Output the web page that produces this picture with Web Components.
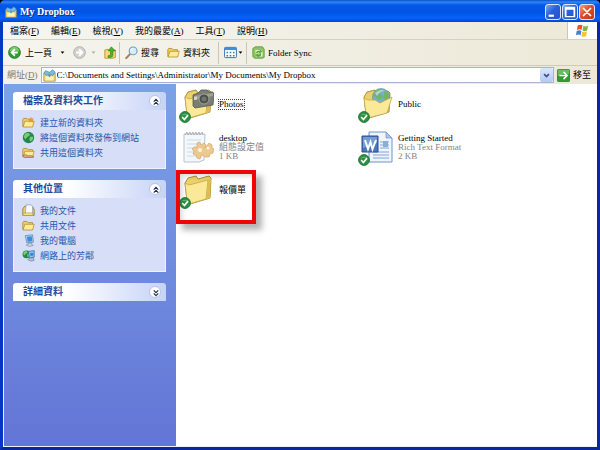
<!DOCTYPE html>
<html lang="zh-Hant">
<head>
<meta charset="utf-8">
<title>My Dropbox</title>
<style>
  body {
    margin: 0;
    background: #000;
    color: #000;
    font: 9px/12px "Liberation Serif", "Noto Sans CJK TC", serif;
  }
</style>
</head>
<body>
<xp-window>
  <xp-title-bar slot="bars" label="My Dropbox"></xp-title-bar>
  <xp-menu-bar slot="bars">
    <xp-menu key="F">檔案</xp-menu>
    <xp-menu key="E">編輯</xp-menu>
    <xp-menu key="V">檢視</xp-menu>
    <xp-menu key="A">我的最愛</xp-menu>
    <xp-menu key="T">工具</xp-menu>
    <xp-menu key="H">說明</xp-menu>
  </xp-menu-bar>
  <xp-tool-bar slot="bars"></xp-tool-bar>
  <xp-address-bar slot="bars" path="C:\Documents and Settings\Administrator\My Documents\My Dropbox"></xp-address-bar>

  <xp-task-group slot="tasks" label="檔案及資料夾工作">
    <xp-task icon="new-folder">建立新的資料夾</xp-task>
    <xp-task icon="globe">將這個資料夾發佈到網站</xp-task>
    <xp-task icon="share">共用這個資料夾</xp-task>
  </xp-task-group>
  <xp-task-group slot="tasks" label="其他位置">
    <xp-task icon="documents">我的文件</xp-task>
    <xp-task icon="folder">共用文件</xp-task>
    <xp-task icon="computer">我的電腦</xp-task>
    <xp-task icon="network">網路上的芳鄰</xp-task>
  </xp-task-group>
  <xp-task-group slot="tasks" label="詳細資料" collapsed></xp-task-group>

  <xp-file icon="big-photos" name="Photos" synced focused></xp-file>
  <xp-file icon="big-public" name="Public" synced></xp-file>
  <xp-file icon="big-config" name="desktop"><span>組態設定值</span><span>1 KB</span></xp-file>
  <xp-file icon="big-word" name="Getting Started" synced><span>Rich Text Format</span><span>2 KB</span></xp-file>
  <xp-file icon="big-folder" name="報價單" synced marked></xp-file>
</xp-window>

<script>
// small icons use a 16 unit box, the big- ones use a 32 unit box
const FOLDER = '<path d="M1 4.500L2 3h4l1.500 1.500H13V13H1z" fill="#f3cf62" stroke="#a67f1c" stroke-width=".9"/><path d="M3.500 6.500H15L13 13.500H1.300z" fill="#ffeb9a" stroke="#b18a25" stroke-width=".9"/>';
const BIG_FOLDER = '<path d="M3 9l3-5 8-2 2 3 11-3 2 2-1 20-20 6-3-4z" fill="#ecd068" stroke="#a8903c"/><path d="M3 9l4 2 19-5-2 19-17 5-2-3z" fill="#fbe998" stroke="#c0a74c" stroke-width=".8"/><path d="M26 6l3-2-1 20-4 2z" fill="#dfbd4d"/>';
const SMALL_GLOBE = '<circle cx="8" cy="8" r="7" fill="#258548"/><path d="M4 3l4-1 2 3-3 2-3 3-2-3zM10 7l4 0-1 4-3 2-1-3z" fill="#76ce6d"/><path d="M2 10l4 4-1 0-3-3zM10 2l3 2-2 1z" fill="#3480c4"/>';

const ICONS = {
  folder: FOLDER,
  'dropbox': '<path d="M1 5h14v10H1z" fill="#efd676" stroke="#ab9240"/><path d="M3 2l5 2 4-3 3 3-3 4-4-2-4 2-3-3z" fill="#75bce9" stroke="#337eac" stroke-width=".7"/><path d="M3 9h10v5H3z" fill="#fff3b6"/><path d="M6 8l2-2 2 2-2 2z" fill="#4a9dd2"/>',
  'flag': '<path d="M3 2.500q3-1.500 5 0L7 7.500q-2-1.500-5 0z" fill="#e6552b"/><path d="M9 3q2 1.500 5 0L13 8q-3 1.500-5 0z" fill="#7cb93d"/><path d="M1.800 8.500q3-1.500 5 0L6 13q-2-1.500-5 0z" fill="#427fd8"/><path d="M7.800 9q2 1.500 5 0l-1 5q-3 1.500-5 0z" fill="#f5c533"/>',
  'back': '<circle cx="8" cy="8" r="7.400" fill="#319b30" stroke="#1d7622" stroke-width=".8"/><path d="M2 7a6 6 0 0 1 12 0q-6-3-12 0z" fill="#77cc69"/><path d="M8.500 4L4.500 8l4 4M5 8h7" fill="none" stroke="#fff" stroke-width="2.200"/>',
  'forward': '<circle cx="8" cy="8" r="7.200" fill="#d2d2cd" stroke="#aaa9a3"/><path d="M7.500 4l4 4-4 4M11 8H4" fill="none" stroke="#fff" stroke-width="2.200"/>',
  'up': '<path d="M1 5l4-1 1 1h8v9l-3 1H1z" fill="#f5db76" stroke="#b18c27"/><path d="M5 14h3q3 0 3-3V6h3l-5-5-4 5h3v4q0 2-3 2z" fill="#4bb42e" stroke="#277b19" stroke-width=".7"/>',
  'search': '<path d="M7 9l-5.500 6" stroke="#a57d5c" stroke-width="2.500" stroke-linecap="round"/><circle cx="10" cy="6" r="4.800" fill="#d5ecfb" stroke="#749bc6" stroke-width="1.400"/><path d="M7 6q0-3 3-3" fill="none" stroke="#fff"/>',
  'views': '<rect x=".7" y="1.700" width="14.600" height="12.600" rx="1" fill="#fff" stroke="#3673b5" stroke-width="1.200"/><path d="M1 2h14v3H1z" fill="#438dd2"/><path d="M3 7h2v2H3zm4 0h2v2H7zm4 0h2v2h-2zM3 11h2v2H3zm4 0h2v2H7zm4 0h2v2h-2z" fill="#3c7da6"/>',
  'sync': '<path d="M1 3l3-2h9l2 3v10l-2 1H3l-2-2z" fill="#8cc463" stroke="#5a9a3c"/><path d="M4 5h7l2 2v6H5z" fill="#e0f1c8"/><path d="M5 9q0-4 5-3l-1-2 4 3-4 2v-1q-2-1-2 1zM11 9q1 4-3 4v1l-4-3 4-2v2q2 0 1-2z" fill="#5ba23a"/>',
  'go': '<rect x=".5" y=".5" width="15" height="15" rx="1.500" fill="#329a37" stroke="#24752b"/><path d="M1 1h14v5Q8 4 1 9z" fill="#67bb61"/><path d="M8 3.500L12.500 8 8 12.500M12 8H3" fill="none" stroke="#fff" stroke-width="1.900"/>',
  'new-folder': FOLDER + '<path d="M11 1l1 2 3 0-2 2 1 3-3-1-2 1 0-3-2-2h3z" fill="#f09235"/>',
  'globe': SMALL_GLOBE,
  'share': FOLDER + '<path d="M1 12q4-3 6 0h5q3 0 2 2H3z" fill="#e5ad78" stroke="#8b5627" stroke-width=".7"/>',
  'documents': '<path d="M1 6l2-3h10l2 4v7H1z" fill="#f0d169" stroke="#8d7430"/><path d="M5 1h6l2 2v9H4z" fill="#f6faff" stroke="#7d90ab" stroke-width=".8"/><path d="M1 13l2-2h10l1 3H1z" fill="#ffe785" stroke="#9f8231" stroke-width=".7"/>',
  'computer': '<path d="M4 2l9-1 1 9-8 1z" fill="#b8d6ee" stroke="#6686aa"/><path d="M6 3.500l6-.7.700 6-5.700.7z" fill="#328edf"/><path d="M8 11h4v2l2 1-5 1.500-4-2 3-1z" fill="#c8ceda" stroke="#7684a0" stroke-width=".7"/>',
  'network': '<g transform="translate(0 1) scale(.7)">' + SMALL_GLOBE + '</g><path d="M8 3l7-1v8l-6 1z" fill="#8dcbf5" stroke="#456b9e"/><path d="M10 5l4-.5V8l-3.500.5z" fill="#3186d7"/><path d="M10 11h4l1 3-4 1-4-2z" fill="#b4c0d3" stroke="#617a9d" stroke-width=".7"/>',
  'minimize': '<path d="M3 11h6v2.500H3z" fill="#fff"/>',
  'maximize': '<path d="M2 2h12v12H2zM4 5.500V12.500h8V5.500z" fill="#fff" fill-rule="evenodd"/>',
  'close': '<path d="M4 4l8 8M12 4l-8 8" stroke="#fff" stroke-width="2" stroke-linecap="round"/>',
  'chevrons-up': '<path d="M5 7.500l3-3 3 3M5 11.500l3-3 3 3" fill="none" stroke="#1d2c55" stroke-width="1.500"/>',
  'chevrons-down': '<path d="M5 4.500l3 3 3-3M5 8.500l3 3 3-3" fill="none" stroke="#1d2c55" stroke-width="1.500"/>',
  'chevron': '<path d="M4.500 6L8 9.500 11.500 6" fill="none" stroke="#3c548c" stroke-width="2.600"/>',
  'caret': '<path d="M2 5h12l-6 7z" fill="currentColor"/>',
  'check': '<circle cx="8" cy="8" r="7.200" fill="#2d9145" stroke="#1b6b2c" stroke-width="1.200"/><path d="M3 6a6 5 0 0 1 10 0q-5-2-10 0z" fill="#69b977"/><path d="M4.200 8l3 3.300L12 5.500" fill="none" stroke="#fff" stroke-width="2.200"/>',
  'big-folder': BIG_FOLDER,
  'big-photos': BIG_FOLDER + '<path d="M11 7l5-2 3-3 6 0 2 2 4 0 1 3-1 10-18 3-2-2z" fill="#7b7e74" stroke="#55584f" stroke-width=".8"/><path d="M12 8l19-3v3l-19 4z" fill="#a0a396"/><circle cx="22" cy="11" r="5" fill="#4b4e4a" stroke="#a2a69b"/><circle cx="22" cy="11" r="2.500" fill="#70776f"/><path d="M12 9l3-.5v3l-3 .5z" fill="#d6d7ca"/>',
  'big-public': '<path d="M3 9l3-5 8-2 2 3 11-2 2 2-1 19-20 6-3-4z" fill="#ecd068" stroke="#a8903c"/><circle cx="20" cy="9" r="8.500" fill="#71b1d1" stroke="#4e8f9b" stroke-width=".6"/><path d="M14 4l4-3 3 2-2 3 3 2-3 4-4-2-2-3zM23 3l4 2 1 5-3 3-3-3 1-3z" fill="#75b463"/><path d="M14 5q5-5 10-2-5 0-8 5z" fill="#cbe6ed" opacity=".7"/><path d="M3 10l4 2 7 0 5 3 12-6-5 16-19 5-2-3z" fill="#fbe998" stroke="#c0a74c" stroke-width=".8"/>',
  'big-config': '<path d="M2 3h21l-1 26-5 2H2z" fill="#f4f8fc" stroke="#b6c4d0"/><path d="M5 9h14M5 13h14M5 17h12M5 21h10M5 25h11" stroke="#c7dce9"/><path d="M3 4l2-3 1 3 2-3 1 3 2-3 1 3 2-3 1 3 2-3 1 3 2-3 1 3" fill="none" stroke="#a3a5a3" stroke-width=".8"/><path d="M15 12l3-1 1 3 3-2 2 2-1 3 4-5 3 2 0 3 2 1-1 4-3 1-1 3-4 0-2-2-2 1-1 3-3-1-1-3-3-1 1-3-2-2 2-2 3 0z" fill="#edc992" stroke="#d5a66c" stroke-width=".7"/><circle cx="18" cy="19" r="2" fill="#fff5df"/><circle cx="26" cy="17" r="1.500" fill="#fff5df"/>',
  'big-word': '<path d="M8 1h17l6 6v24H8z" fill="#eff5ff" stroke="#6f94c7"/><path d="M25 1v6h6z" fill="#a9c7eb" stroke="#6f94c7" stroke-width=".7"/><path d="M19 11h9M19 14h9M19 17h9M12 21h16M12 24h16M12 27h16" stroke="#81a4d3"/><path d="M22 10h5v6h-5z" fill="#8cadd4"/><path d="M1 5h16v16H1z" fill="#4c78bb" stroke="#2b4d8e"/><path d="M2 6h14v6L2 17z" fill="#759dd5"/><path d="M4 9l3 9 2.500-7 2 7L15 9" fill="none" stroke="#fff" stroke-width="2"/>'
};

function define(name, html, setup) {
  const template = document.createElement('template');
  template.innerHTML = html;
  customElements.define(name, class extends HTMLElement {
    constructor() {
      super();
      this.attachShadow({ mode: 'open' }).appendChild(template.content.cloneNode(true));
    }
    connectedCallback() {
      if (setup) setup(this, this.shadowRoot);
    }
  });
}

define('xp-icon', `
  <style>
    :host { display: block; flex: none; width: 13px; height: 13px; }
    svg { display: block; width: 100%; height: 100%; }
  </style>
  <svg aria-hidden="true"></svg>
`, (host, root) => {
  const name = host.getAttribute('name');
  const box = name.startsWith('big-') ? 32 : 16;
  const svg = root.querySelector('svg');
  svg.setAttribute('viewBox', `0 0 ${box} ${box}`);
  svg.innerHTML = ICONS[name];
});

define('xp-window', `
  <style>
    :host {
      display: flex;
      flex-direction: column;
      box-sizing: border-box;
      min-height: 100vh;
      border: solid;
      border-width: 0 3px 3px;
      border-color: #0831d9 #0a279c #0a279c #0735c4;
      border-radius: 5px 5px 0 0;
      background: #0055e5;
    }
    main { flex: 1; display: flex; border-left: 1px solid #eef3fb; border-bottom: 1px solid #eef3fb; background: #fff; }
    aside {
      flex: none;
      box-sizing: border-box;
      width: 172px;
      padding: 8px 10px 8px 9px;
      display: flex;
      flex-direction: column;
      gap: 11px;
      background: linear-gradient(#7ba2e7, #6375d6);
    }
    section {
      flex: 1;
      display: grid;
      grid-template-columns: repeat(auto-fill, 176px);
      grid-auto-rows: 40px;
      gap: 3px;
      padding-left: 6px;
      align-content: start;
    }
  </style>
  <slot name="bars"></slot>
  <main>
    <aside><slot name="tasks"></slot></aside>
    <section><slot></slot></section>
  </main>
`);

define('xp-title-bar', `
  <style>
    :host {
      display: flex;
      align-items: center;
      gap: 3px;
      height: 22px;
      margin: 0 -3px;
      padding: 2px 5px 0 5px;
      box-sizing: border-box;
      border-radius: 5px 5px 0 0;
      background: linear-gradient(#0a4fc4, #2f86fa 2px, #0458e8 5px, #0253e3 12px, #0463fb 18px, #0146cc);
      color: #fff;
    }
    h1 { flex: 1; margin: 0; font-size: 10px; line-height: 14px; text-shadow: 1px 1px #0a2a86; }
    button {
      display: grid;
      place-items: center;
      width: 16px;
      height: 16px;
      padding: 0;
      border: 1px solid #dde8fb;
      border-radius: 3px;
      background: linear-gradient(135deg, #7fa6f2, #2a5edb 45%, #2454cf);
    }
    .buttons { display: flex; gap: 1px; }
    .close { background: linear-gradient(135deg, #f0a18a, #dd4f2b 45%, #c2371a); }
    button xp-icon { width: 14px; height: 14px; }
    .logo { width: 12px; height: 12px; }
  </style>
  <xp-icon class="logo" name="dropbox"></xp-icon>
  <h1></h1>
  <div class="buttons">
    <button aria-label="Minimize"><xp-icon name="minimize"></xp-icon></button>
    <button aria-label="Maximize"><xp-icon name="maximize"></xp-icon></button>
    <button class="close" aria-label="Close"><xp-icon name="close"></xp-icon></button>
  </div>
`, (host, root) => {
  root.querySelector('h1').textContent = host.getAttribute('label');
});

define('xp-menu-bar', `
  <style>
    :host {
      display: flex;
      height: 18px;
      box-sizing: border-box;
      border-bottom: 1px solid #d5d1c0;
      background: linear-gradient(90deg, #f6f5f1, #ece9d8);
    }
    nav { flex: 1; display: flex; align-items: center; gap: 12px; padding-left: 7px; }
    .throbber { display: grid; place-items: center; width: 29px; border-left: 1px solid #cbc7b8; background: #fff; }
    xp-icon { width: 15px; height: 15px; }
  </style>
  <nav><slot></slot></nav>
  <div class="throbber"><xp-icon name="flag"></xp-icon></div>
`);

define('xp-menu', `
  <style>
    :host { display: block; }
    button { display: block; padding: 0; border: 0; background: none; color: inherit; font: inherit; white-space: nowrap; }
  </style>
  <button><slot></slot>(<u></u>)</button>
`, (host, root) => {
  root.querySelector('u').textContent = host.getAttribute('key');
});

define('xp-tool-bar', `
  <style>
    :host {
      display: flex;
      align-items: center;
      height: 26px;
      box-sizing: border-box;
      padding: 0 5px;
      border-bottom: 1px solid #cfcbb9;
      background: linear-gradient(90deg, #f5f4ee, #ece9d8);
    }
    button {
      display: flex;
      align-items: center;
      gap: 3px;
      padding: 0;
      margin-right: 8px;
      border: 0;
      background: none;
      color: inherit;
      font: inherit;
      white-space: nowrap;
    }
    .caret { width: 5px; height: 5px; }
    .wide { gap: 8px; }
    .narrow { gap: 1px; margin-right: 3px; }
    .off { gap: 5px; color: #aca899; }
    .last { margin-right: 2px; }
    .label { display: flex; align-items: center; gap: 4px; }
    hr { flex: none; width: 1px; height: 22px; margin: 0 5px 0 0; border: 0; background: #cbc7b6; }
  </style>
  <button class="wide"><span class="label"><xp-icon name="back"></xp-icon>上一頁</span><xp-icon class="caret" name="caret"></xp-icon></button>
  <button class="off" aria-label="下一頁"><xp-icon name="forward"></xp-icon><xp-icon class="caret" name="caret"></xp-icon></button>
  <button class="last" aria-label="上移"><xp-icon name="up"></xp-icon></button>
  <hr>
  <button><xp-icon name="search"></xp-icon>搜尋</button>
  <button><xp-icon name="folder"></xp-icon>資料夾</button>
  <hr>
  <button class="narrow" aria-label="檢視"><xp-icon name="views"></xp-icon><xp-icon class="caret" name="caret"></xp-icon></button>
  <hr>
  <button><xp-icon name="sync"></xp-icon>Folder Sync</button>
`);

define('xp-address-bar', `
  <style>
    :host {
      display: flex;
      align-items: center;
      gap: 3px;
      height: 18px;
      box-sizing: border-box;
      padding: 0 6px 0 4px;
      background: linear-gradient(90deg, #f3f1e9, #ece9d8);
    }
    label { color: #7d7a70; white-space: nowrap; }
    .box {
      flex: 1;
      display: flex;
      align-items: center;
      gap: 1px;
      box-sizing: border-box;
      height: 16px;
      padding-left: 1px;
      border: 1px solid #a5b7c8;
      background: #fff;
    }
    input { flex: 1; min-width: 0; height: 14px; padding: 0; border: 0; outline: 0; background: none; color: inherit; font: inherit; }
    button { display: flex; align-items: center; gap: 3px; padding: 0; border: 0; background: none; color: inherit; font: inherit; white-space: nowrap; }
    .drop { justify-content: center; width: 13px; height: 14px; border-radius: 2px; background: linear-gradient(#dbe6fe, #b5c9f6); }
    .drop xp-icon { width: 11px; height: 11px; }
  </style>
  <label for="path">網址(<u>D</u>)</label>
  <div class="box">
    <xp-icon name="dropbox"></xp-icon>
    <input id="path" type="text" spellcheck="false">
    <button class="drop" aria-label="網址清單"><xp-icon name="chevron"></xp-icon></button>
  </div>
  <button><xp-icon name="go"></xp-icon>移至</button>
`, (host, root) => {
  root.querySelector('input').value = host.getAttribute('path');
});

define('xp-task-group', `
  <style>
    :host { display: block; }
    header {
      display: flex;
      align-items: center;
      height: 18px;
      padding: 0 5px 0 10px;
      border-radius: 3px 3px 0 0;
      background: linear-gradient(90deg, #fff 35%, #c6d3f7);
    }
    h2 { flex: 1; margin: 0; color: #1d4a9e; font-size: 10px; line-height: 14px; }
    button {
      display: grid;
      place-items: center;
      width: 12px;
      height: 12px;
      padding: 0;
      border: 1px solid #b8c4e2;
      border-radius: 50%;
      background: #fff;
    }
    button xp-icon { width: 12px; height: 12px; }
    .body { padding: 5px 8px 8px; border: 1px solid #eef2fd; border-top: 0; background: #d6dff7; }
    :host([collapsed]) .body { display: none; }
  </style>
  <header><h2></h2><button></button></header>
  <div class="body"><slot></slot></div>
`, (host, root) => {
  const button = root.querySelector('button');
  const draw = () => {
    const closed = host.hasAttribute('collapsed');
    button.setAttribute('aria-expanded', String(!closed));
    button.innerHTML = `<xp-icon name="chevrons-${closed ? 'down' : 'up'}"></xp-icon>`;
  };
  root.querySelector('h2').textContent = host.getAttribute('label');
  button.setAttribute('aria-label', host.getAttribute('label'));
  button.addEventListener('click', () => {
    host.toggleAttribute('collapsed');
    draw();
  });
  draw();
});

define('xp-task', `
  <style>
    :host { display: block; }
    a { display: flex; align-items: center; gap: 5px; height: 15px; color: #2456ad; text-decoration: none; white-space: nowrap; }
    a:hover { text-decoration: underline; }
  </style>
  <a href="#"><slot></slot></a>
`, (host, root) => {
  const icon = document.createElement('xp-icon');
  icon.setAttribute('name', host.getAttribute('icon'));
  root.querySelector('a').prepend(icon);
});

define('xp-file', `
  <style>
    :host { position: relative; display: flex; align-items: center; gap: 5px; line-height: 9px; }
    .icon { position: relative; flex: none; }
    .icon > xp-icon { width: 32px; height: 32px; }
    .icon .badge { position: absolute; left: -3px; bottom: -3px; width: 12px; height: 12px; }
    .text { display: flex; flex-direction: column; align-items: flex-start; color: #848484; white-space: nowrap; }
    .name { color: #000; }
    :host([focused]) .name { outline: 1px dotted #444; }
    .mark {
      position: absolute;
      left: -6px;
      top: 0;
      box-sizing: border-box;
      width: 80px;
      height: 54px;
      border: 4px solid #f00505;
      box-shadow: 6px 6px 6px rgba(0, 0, 0, .3), inset 3px 3px 4px rgba(0, 0, 0, .12);
      pointer-events: none;
    }
  </style>
  <div class="icon"></div>
  <div class="text"><span class="name"></span><slot></slot></div>
`, (host, root) => {
  const badge = host.hasAttribute('synced') ? '<xp-icon class="badge" name="check"></xp-icon>' : '';
  root.querySelector('.icon').innerHTML = `<xp-icon name="${host.getAttribute('icon')}"></xp-icon>${badge}`;
  root.querySelector('.name').textContent = host.getAttribute('name');
  if (host.hasAttribute('marked')) {
    const mark = document.createElement('div');
    mark.className = 'mark';
    root.appendChild(mark);
  }
});
</script>
</body>
</html>
